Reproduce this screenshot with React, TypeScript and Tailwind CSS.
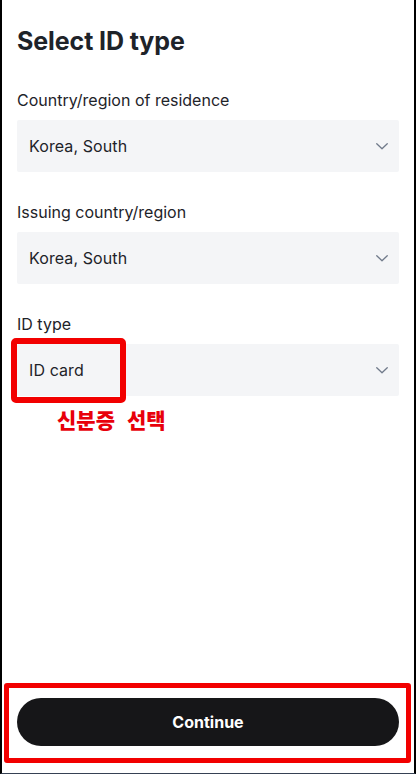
import React from 'react';

const fields = [
  { label: 'Country/region of residence', value: 'Korea, South' },
  { label: 'Issuing country/region', value: 'Korea, South' },
  { label: 'ID type', value: 'ID card' },
];

const Chevron: React.FC = () => (
  <svg width="12" height="7" viewBox="0 0 12 7" fill="none">
    <path d="M0.75 0.75L6 5.75L11.25 0.75" stroke="#707a8a" strokeWidth="1.3" strokeLinecap="round" strokeLinejoin="round" />
  </svg>
);

const App: React.FC = () => {
  return (
    <div
      className="relative w-[416px] h-[774px] bg-white border-l-2 border-r-2 border-b border-l-black border-r-black border-b-gray-700 flex flex-col px-[15px] pt-[25px] pb-[27px] text-[#1e2329]"
      style={{ fontFamily: 'Inter, "Noto Sans", sans-serif' }}
    >
      <h1 className="text-[25px] leading-8 font-bold tracking-[-0.1px]">Select ID type</h1>

      <div className="mt-[31px] flex flex-col gap-7">
        {fields.map((f) => (
          <div key={f.label} className="flex flex-col gap-2">
            <p className="text-[16px] leading-6">{f.label}</p>
            <div className="h-[52px] bg-[#f4f5f7] rounded-[2px] flex items-center justify-between pl-3 pr-[11px]">
              <span className="text-[16px] leading-6 tracking-[0.1px]">{f.value}</span>
              <Chevron />
            </div>
          </div>
        ))}
      </div>

      <div className="flex-1" />

      <button className="h-12 w-full rounded-full bg-[#161618] text-white text-[16px] font-bold">
        Continue
      </button>

      {/* annotations */}
      <div className="absolute left-[9px] top-[338px] w-[115px] h-[65px] border-[6px] border-[#f20000] rounded-[5px]" />
      <div
        className="absolute left-[55px] top-[409px] flex gap-[12px] text-[21px] leading-none font-black text-[#e8000b]"
        style={{ fontFamily: '"Noto Sans CJK KR", sans-serif' }}
      >
        <span>신분증</span>
        <span>선택</span>
      </div>
      <div className="absolute left-[2px] top-[683px] w-[407px] h-[80px] border-[5px] border-[#f20000] rounded-[3px]" />
    </div>
  );
};

export default App;
